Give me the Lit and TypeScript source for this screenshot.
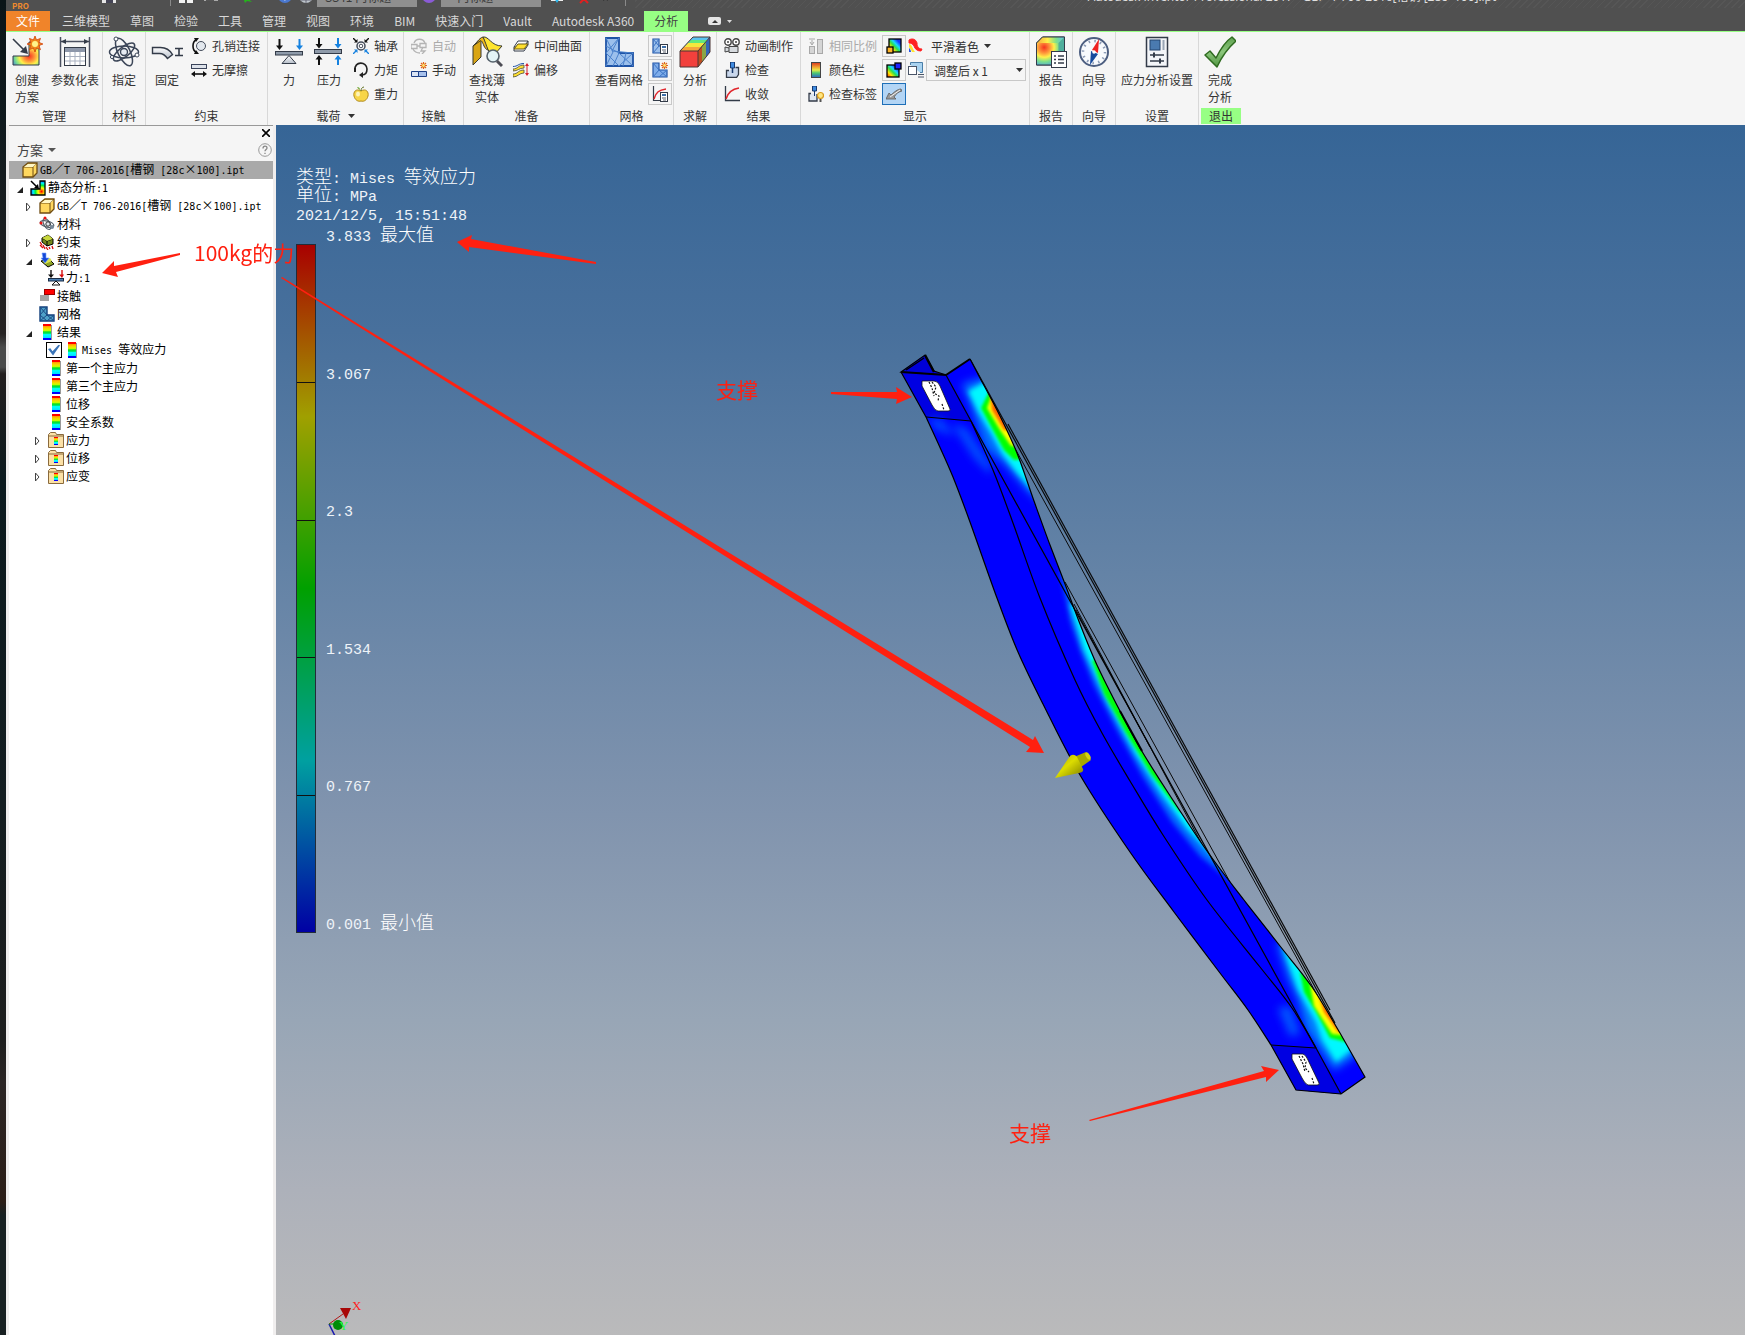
import { LitElement, html, svg, css, nothing, TemplateResult, SVGTemplateResult } from "lit";
import { customElement, state } from "lit/decorators.js";
import { classMap } from "lit/directives/class-map.js";

type Art = SVGTemplateResult;

/* ---------- 32px command icons ---------- */
const big: Record<string, Art> = {
  study: svg`<path d="M2 20h16V6h10v23H2z" fill="url(#g-heat)" stroke="#333b48"/><path d="M2 3l12 12" stroke="#333b48" stroke-width="1.600"/><path d="M17 18l-8-2 6-6z" fill="#333b48"/><path d="M24 0l1.500 4 4-1.600-1.600 4 4 1.600-4 1.600 1.600 4-4-1.600L24 16l-1.600-4-4 1.600 1.600-4-4-1.600 4-1.600-1.600-4 4 1.600z" fill="#f08a1c" stroke="#d2400a" stroke-width=".8"/><circle cx="24" cy="8" r="3" fill="#fff48a"/>`,
  table: svg`<path d="M1.500 1v30M30.500 1v30M2 5.500h28" stroke="#4a5060" stroke-width="1.500"/><path d="M2 5.500l5-2.500v5zM30 5.500l-5-2.500v5z" fill="#333b48"/><rect x="5.500" y="11.500" width="21" height="18" fill="#fff" stroke="#333b48"/><path d="M6 12h20v4H6z" fill="#8d97aa"/><path d="M6 20.500h20M6 25h20M11 16v13M16 16v13M21 16v13" stroke="#a9b1c0"/>`,
  atom: svg`<g fill="none" stroke="#3c4658" stroke-width="1.500"><ellipse cx="16" cy="16" rx="14.500" ry="6"/><ellipse cx="16" cy="16" rx="15" ry="6" transform="rotate(64 16 16)"/><ellipse cx="16" cy="16" rx="13" ry="5" transform="rotate(142 16 16)"/></g><circle cx="16" cy="16" r="3.500" fill="#e6ebf2" stroke="#3c4658" stroke-width="1.400"/><circle cx="8" cy="3" r="2" fill="#fff" stroke="#3c4658"/><circle cx="29" cy="19" r="2" fill="#fff" stroke="#3c4658"/><circle cx="4" cy="21" r="1.600" fill="#fff" stroke="#3c4658"/>`,
  fixed: svg`<path d="M1.500 11.500h8c5 0 9 2 12 7l-5 4c-2-3-4-5-8-5h-7z" fill="url(#g-steel)" stroke="#333b48" stroke-width="1.400"/><path d="M24 12.500h8M24 19.500h8M28 12.500v7" stroke="#333b48" stroke-width="1.600"/>`,
  force: svg`<path d="M6.500 3v8" stroke="#111" stroke-width="2"/><path d="M3 9.500h7L6.500 14z" fill="#111"/><path d="M26.500 3v8" stroke="#1682e0" stroke-width="2"/><path d="M23 9.500h7L26.500 14z" fill="#1682e0"/><rect x="2.500" y="15.500" width="27" height="3.500" fill="#8f9baa" stroke="#333b48"/><path d="M16 19.500l7 8H9z" fill="url(#g-steel)" stroke="#333b48"/>`,
  pressure: svg`<g stroke-width="2"><path d="M6 2v7M6 29v-7" stroke="#111"/><path d="M25 2v7M25 29v-7" stroke="#1682e0"/></g><path d="M2.500 8h7L6 12.500zM2.500 23.500h7L6 19z" fill="#111"/><path d="M21.500 8h7L25 12.500zM21.500 23.500h7L25 19z" fill="#1682e0"/><rect x="1.500" y="13.500" width="27" height="4" fill="#8f9baa" stroke="#333b48"/>`,
  thin: svg`<path d="M2 10v19l8-8V2z" fill="#d9a514" stroke="#3a3a30"/><path d="M2 10C5 8 8 2 12 1l8 12c-3 2-5 1-7-3-2-5-3-6-4-5z" fill="#f0b91a" stroke="#3a3a30"/><path d="M12 1c6-1 8 9 19 9l-8 9c-6 0-7-10-11-18z" fill="#ffe52e" stroke="#3a3a30"/><circle cx="22" cy="20" r="6" fill="#e4f4f6" stroke="#56626c" stroke-width="1.600"/><path d="M26 25l5 5" stroke="#4d4d55" stroke-width="3"/>`,
  mesh: svg`<path d="M3 2h13v15h14v13H3z" fill="#9cc0ec" stroke="#1e53a6" stroke-width="1.800"/><path d="M3 2l7 14L3 30M16 2L3 17l13 13M16 2L9 15l21 2M16 17L3 10M30 17L16 30M16 17l14 13M16 17l-6 13M23 17l-3 13" fill="none" stroke="#4b82cc"/>`,
  solve: svg`<path d="M1 15L14 1h17L19 15z" fill="#5ac4f0"/><path d="M1 15l4-4h17l-3 4z" fill="#f7a53a"/><path d="M5 11l4-4h17l-4 4z" fill="#f5e83c"/><path d="M9 7l3-3h17l-3 3z" fill="#62e87c"/><path d="M19 15l4-5v16l-4 5z" fill="#bf4e22"/><path d="M23 10l4-4v15l-4 5z" fill="#8aa646"/><path d="M27 6l4-5v15l-4 5z" fill="#3366b8"/><rect x="1" y="15" width="18" height="16" fill="#f2403c"/><path d="M1 15L14 1h17v15L19 31H1zM1 15h18v16M19 15L31 1" fill="none" stroke="#4a3434"/>`,
  report: svg`<path d="M1.500 7l6-6h22v21l-6 7h-22z" fill="#8fdc6a" stroke="#333b48"/><path d="M1.500 7l6-6h22l-6 6z" fill="url(#g-top)"/><path d="M1.500 7h22v22h-22z" fill="url(#g-front)"/><path d="M23.500 7l6-6v21l-6 7z" fill="#4fae9c"/><path d="M1.500 7l6-6h22v21l-6 7h-22z" fill="none" stroke="#333b48"/><rect x="16.500" y="15.500" width="15" height="16" fill="#fff" stroke="#333b48"/><path d="M19 20h2M19 23.500h2M19 27h2M23 20h6M23 23.500h6M23 27h6" stroke="#333b48" stroke-width="1.600"/>`,
  compass: svg`<circle cx="16" cy="16" r="14" fill="#f7f9fc" stroke="#4c5e80" stroke-width="2"/><circle cx="16" cy="16" r="11" fill="none" stroke="#8c9bb5" stroke-width="2.500" stroke-dasharray="1.500 4.260"/><path d="M21 3l-1 14-6-3z" fill="#ee2222"/><path d="M12 29l1-14 7 3z" fill="#174a9c"/><circle cx="16" cy="16" r="1.800" fill="#fff"/>`,
  settings: svg`<rect x="5.500" y="1.500" width="21" height="29" fill="#f3f5f8" stroke="#333b48" stroke-width="1.500"/><rect x="9" y="4" width="10" height="10" fill="#4a7ab0" stroke="#24456e"/><path d="M22.500 4v10" stroke="#99a5b5" stroke-width="2"/><path d="M9 19h14M9 25h14" stroke="#333b48" stroke-width="1.400"/><path d="M13 16.500v5M19 22.500v5" stroke="#333b48" stroke-width="2"/>`,
  check: svg`<path d="M1 19l5-4 6 7C17 12 22 5 28 1l4 4C25 11 18 20 13 31z" fill="url(#g-green)" stroke="#2f6b20" stroke-width="1.500" stroke-linejoin="round"/>`,
};

/* ---------- 16px command icons ---------- */
const small: Record<string, Art> = {
  pin: svg`<path d="M5 2C1 4 1 12 5 14" fill="none" stroke="#111" stroke-width="1.600"/><path d="M3 0h5L5 4zM3 16h5l-3-4z" fill="#111"/><circle cx="10" cy="8" r="4.500" fill="#e3e8ee" stroke="#444c5a"/>`,
  slide: svg`<rect x=".5" y="2.500" width="15" height="4" fill="#dde2ea" stroke="#39435a"/><path d="M2 12h12" stroke="#111" stroke-width="1.600"/><path d="M0 12l4-3v6zM16 12l-4-3v6z" fill="#111"/>`,
  bearing: svg`<circle cx="8" cy="8" r="4" fill="#fff" stroke="#444c5a" stroke-width="1.500"/><circle cx="8" cy="8" r="1.800" fill="none" stroke="#444c5a"/><path d="M0 0l3 3M16 0l-3 3" stroke="#111" stroke-width="1.400"/><path d="M0 16l3-3M16 16l-3-3" stroke="#1682e0" stroke-width="1.400"/><path d="M4.500 1v3.500H1zM11.500 1v3.500H15z" fill="#111"/><path d="M4.500 15v-3.500H1zM11.500 15v-3.500H15z" fill="#1682e0"/>`,
  moment: svg`<path d="M2 8C1 -1 14 -1 14 7c0 4-2 6-5 6" fill="none" stroke="#222" stroke-width="1.600"/><path d="M10 10v6l-4-3z" fill="#222"/><path d="M2 6v4" stroke="#222" stroke-width="2"/>`,
  gravity: svg`<path d="M8 5C3 2 0 6 1 10c1 4 4 6 7 5 3 1 6-1 7-5 1-4-2-8-7-5z" fill="#f7d548" stroke="#b08a1c"/><path d="M8 5c0-2 1-4 3-4" stroke="#5c6e20" fill="none"/><path d="M7 4C5 3 4 1 4 1c2 0 3 1 3 3z" fill="#6ba52e"/><ellipse cx="5" cy="8" rx="2" ry="2.500" fill="#fdf3b8"/>`,
  auto: svg`<g fill="none" stroke="#b4b4b4" stroke-width="1.300"><path d="M3 5c2-5 9-5 11 0M2 11c2 4 5 4 7 4"/><path d="M0 6.500h6v4H0zM9 5.500h6v4H9zM6 8h3"/><path d="M12 9l-2 4h4l-3 3"/></g>`,
  manual: svg`<path d="M.5 9.500h7v5h-7z" fill="#dce5f4" stroke="#1c3f86"/><path d="M7.500 9.500h8v5h-8z" fill="#a7c1ec" stroke="#1c3f86"/><path d="M12.500 0v7M9 3.500h7M10 1l5 5M15 1l-5 5" stroke="#e0661a" stroke-width="1.200"/><circle cx="12.500" cy="3.500" r="1.400" fill="#ffe36b"/>`,
  midsurf: svg`<path d="M1 9l4-6h10l-4 6zM1 9v4h10l4-6V3" fill="#fff" stroke="#333b48"/><path d="M1 11l4-5h10l-4 5z" fill="#ffe02e" stroke="#6a5a14"/>`,
  offset: svg`<path d="M0 7c5 0 5-4 11-4v3C6 6 5 9 0 9zM0 12c5 0 5-4 11-4v3c-5 0-6 4-11 4z" fill="#ffe02e" stroke="#4a4a40" stroke-width=".8"/><path d="M0 4.500c5 0 5-3 11-3" stroke="#1e53a6" fill="none"/><path d="M14 3v9" stroke="#d8202c"/><path d="M12 4l2-3 2 3zM12 11l2 3 2-3z" fill="#d8202c"/>`,
  meshset: svg`<path d="M1 1h6v7h8v7H1z" fill="#9cc0ec" stroke="#1e53a6" stroke-width="1.200"/><path d="M1 1l6 7-6 7M7 1L1 9" fill="none" stroke="#3c74c4"/><rect x="8.500" y="6.500" width="7" height="9" fill="#fff" stroke="#333b48"/><rect x="10" y="8" width="4" height="2" fill="#3b6ea8"/><path d="M10 12h4M11 14h3" stroke="#333b48" stroke-width=".8"/>`,
  meshnew: svg`<path d="M1 1h6v7h8v7H1z" fill="#7fadea" stroke="#1e53a6" stroke-width="1.200"/><path d="M1 1l6 7-6 7M7 8l8 7M15 8l-8 7" fill="none" stroke="#3c74c4"/><path d="M12.500 0v7M9 3.500h7M10 1l5 5M15 1l-5 5" stroke="#e0661a" stroke-width="1.200"/><circle cx="12.500" cy="3.500" r="1.400" fill="#ffe36b"/>`,
  convset: svg`<path d="M1.500 0v14.500H8" fill="none" stroke="#333b48" stroke-width="1.200"/><path d="M2 13C4 6 7 4 14 3" fill="none" stroke="#e0262c" stroke-width="1.500"/><rect x="8.500" y="6.500" width="7" height="9" fill="#fff" stroke="#333b48"/><rect x="10" y="8" width="4" height="2" fill="#3b6ea8"/><path d="M10 12h4M11 14h3" stroke="#333b48" stroke-width=".8"/>`,
  animate: svg`<circle cx="4" cy="4" r="3.200" fill="#fff" stroke="#444" stroke-width="1.400"/><circle cx="12" cy="4" r="3.200" fill="#fff" stroke="#444" stroke-width="1.400"/><circle cx="4" cy="4" r="1" fill="#444"/><circle cx="12" cy="4" r="1" fill="#444"/><path d="M5 8.500h9v6H5zM5 10l-4-1v5l4-1" fill="#d6dade" stroke="#444"/>`,
  probe: svg`<path d="M5 8.500H2.500v7h10l2-3v-7h-3" fill="#c9d7ec" stroke="#333b48" stroke-width="1.300"/><path d="M6.500 0h4v6h-4z" fill="#3f8be0" stroke="#17386e"/><path d="M8.500 6v5" stroke="#17386e" stroke-width="1.500"/>`,
  converge: svg`<path d="M1.500 0v14.500H16" fill="none" stroke="#333b48" stroke-width="1.300"/><path d="M2 13C4 6 8 3 15 2" fill="none" stroke="#e0262c" stroke-width="1.600"/>`,
  same: svg`<g fill="#d5d5d5" stroke="#a8a8a8"><rect x="1.500" y="8.500" width="5" height="7"/><rect x="9.500" y="1.500" width="5" height="14"/></g><path d="M1 1h6M4 2v4M2 4l2 3 2-3" fill="none" stroke="#a8a8a8"/>`,
  colorbar: svg`<rect x="3.500" y=".5" width="9" height="15" fill="url(#g-rain)" stroke="#444"/>`,
  probelabel: svg`<path d="M3 7.500H1v7.500h8V8" fill="#dfe7f2" stroke="#333b48" stroke-width="1.300"/><path d="M4.500 0h4v5h-4zM6.500 5v5" fill="#3f8be0" stroke="#17386e"/><circle cx="12.500" cy="9.500" r="3" fill="#ffe680" stroke="#d99a1a" stroke-width="1.200"/><path d="M12.500 13v3" stroke="#555" stroke-width="2"/>`,
  maxval: svg`<rect x="3" y="1" width="12" height="13" fill="url(#g-heat2)" stroke="#000" stroke-width="1.300"/><rect x="1" y="9" width="6" height="6" fill="#ffb428" stroke="#000" stroke-width="1.300"/>`,
  minval: svg`<rect x="1" y="3" width="12" height="12" fill="url(#g-heat2)" stroke="#000" stroke-width="1.300"/><rect x="9" y="1" width="6" height="6" fill="#1c22ff" stroke="#000" stroke-width="1.300"/>`,
  boundary: svg`<path d="M0 13l3-6 2 2c3-3 7-6 10-6l1 2c-4 1-6 3-8 6l2 2z" fill="#9a9a9a" stroke="#5c5c5c" stroke-width=".8"/><path d="M4 11l10-7" stroke="#f3f3f3"/>`,
  smooth: svg`<path d="M1 2c3-2 7-1 8 3 0 4 2 6 5 6l-1 2c-4 0-6-2-7-5-1-2-3-3-5-3z" fill="#f22" stroke="#f22"/><path d="M1 6c3 0 3 4 6 8H4C3 11 1 10 1 9z" fill="#ffe52e"/><path d="M1 10c1 1 2 2 2 4H1z" fill="#2453e8"/>`,
  adjust: svg`<path d="M2.500 3V.5h12v10H12" fill="#a9d3f0" stroke="#4a7ea8"/><rect x=".5" y="4.500" width="8" height="8" fill="#fff" stroke="#4a5568"/><path d="M10 12.500h6M10 15h6" stroke="#4a5568"/>`,
};

/* ---------- 16px browser-tree icons ---------- */
const node: Record<string, Art> = {
  part: svg`<path d="M1 5l5-4h9v10l-4 4H1z" fill="#ffd75e" stroke="#6f4c12" stroke-width="1.300"/><path d="M1 5h10l4-4M11 5v10" fill="none" stroke="#6f4c12"/><path d="M2 5l4-3h8l-3 3z" fill="#fff6c4"/>`,
  study: svg`<path d="M1 9h9V1h5v14H1z" fill="url(#g-heat3)" stroke="#000" stroke-width="1.300"/><path d="M1 1l6 6" stroke="#000" stroke-width="1.500"/><path d="M9 9L4 8l4-4z" fill="#000"/>`,
  material: svg`<g fill="none" stroke="#56626c" stroke-width="1.300"><ellipse cx="8" cy="8" rx="7" ry="3" transform="rotate(15 8 8)"/><ellipse cx="8" cy="8" rx="6" ry="3" transform="rotate(60 8 8)"/></g><circle cx="9" cy="8" r="2.200" fill="#dfe6ee" stroke="#333"/><circle cx="2" cy="7" r="1.500" fill="#e11"/><circle cx="6" cy="2" r="1.500" fill="#e11"/><circle cx="13" cy="11" r="2" fill="#789"/>`,
  constraint: svg`<path d="M3 4l6-3 5 4v5l-6 2-5-4z" fill="#76891c" stroke="#000"/><path d="M3 4l5 3 6-2M8 7v5" stroke="#000" fill="none"/><path d="M3 4l6-3 5 4-6 2z" fill="#c8d83e"/><path d="M1 8l2 3M1 11l3 3M4 11l2 4M7 13l2 3M10 13l1 2M13 12l1 3" stroke="#d80c0c" stroke-width="1.300"/>`,
  load: svg`<path d="M2 9l8-2 5 5-6 3z" fill="#8fa426" stroke="#000"/><path d="M4 8l7-2 2 3-7 3z" fill="#d7e24e"/><path d="M3 1h4v5h3l-4 5-4-5h2z" fill="#1448d8" stroke="#6fa2ff" stroke-width=".6"/>`,
  force: svg`<path d="M3 0v6" stroke="#111" stroke-width="1.400"/><path d="M14 0v6" stroke="#d80c0c" stroke-width="1.400"/><path d="M0 4.500h6L3 8z" fill="#111"/><path d="M11 4.500h5L14 8z" fill="#d80c0c"/><rect x=".5" y="8.500" width="15" height="2.500" fill="#4a7fb4" stroke="#1a2c44"/><path d="M8 11l4 4H4z" fill="#fff" stroke="#111"/>`,
  contact: svg`<rect x="5.500" y="1.500" width="10" height="5" fill="#f00" stroke="#900"/><rect x="1" y="7" width="9" height="6" fill="#a5a5a5"/>`,
  mesh: svg`<path d="M1 1h7v8h7v6H1z" fill="#4fa0c8" stroke="#123f7c" stroke-width="1.400"/><path d="M1 1l7 8-7 6M8 1L1 9l7 6M15 9l-7 6M8 9l7 6" fill="none" stroke="#1c4a84"/>`,
  band: svg`<rect x="4" width="8" height="16" fill="url(#g-band)"/><path d="M12.500 1v15" stroke="#999"/>`,
  folder: svg`<path d="M.5 2.500l2-2h5l1 2h7v13H.5z" fill="#fbe0a6" stroke="#8a6a3c"/><path d="M1 4h14" stroke="#8a6a3c"/><rect x="6" y="5" width="4" height="8" fill="url(#g-band)"/>`,
};

/* ---------- quick access icons ---------- */
const quick: Record<string, Art> = {
  新建: svg`<path d="M1 1h14v11H1z" fill="#eee"/>`,
  打开: svg`<path d="M3 3h8v7H3z" fill="#777"/>`,
  保存: svg`<path d="M1 1h14v14H1z" fill="#e6e6e6"/><path d="M5 9h7v6H5z" fill="#445"/>`,
  放弃: svg`<path d="M7 5l-3 4 4 2" fill="none" stroke="#ddd" stroke-width="2"/>`,
  重做: svg`<path d="M9 5l3 4-4 2" fill="none" stroke="#888" stroke-width="2"/>`,
  主页: svg`<path d="M1 3h14v12H9v-5H7v5H1z" fill="#f2f2f2"/>`,
  窗口: svg`<path d="M1 5h14v8H1z" fill="#aaa"/><path d="M3 8h8v5H3z" fill="#555"/>`,
  选择: svg`<path d="M3 4l11 10-5-1-2 2z" fill="#25b21c"/>`,
  材料浏览器: svg`<circle cx="8" cy="8" r="7" fill="#4a78d0"/><path d="M3 7h8l-3 6z" fill="#e6eefc"/>`,
  外观浏览器: svg`<circle cx="8" cy="8" r="7" fill="#bfc6cc"/><path d="M2 8h12M8 1v14M3 12h10" stroke="#667"/>`,
  颜色: svg`<circle cx="8" cy="8" r="7" fill="#8a5bd6"/><circle cx="7" cy="8" r="4" fill="#e87ac0"/>`,
  调整: svg`<path d="M8 4v9M2 12h12" stroke="#eee" stroke-width="2"/><path d="M5 10h6l-3 5z" fill="#28b8f0"/>`,
  清除: svg`<path d="M1 9h8" stroke="#eee" stroke-width="2"/><path d="M7 7l8 8M15 7l-8 8" stroke="#e02020" stroke-width="2"/>`,
  参数: svg`<path d="M4 3v9M9 7l5 5M14 7l-5 5" stroke="#222" stroke-width="2"/>`,
};

const ico = (art: Art, size = 16) =>
  html`<svg class="ico" width=${size} height=${size} viewBox="0 0 ${size} ${size}" aria-hidden="true">${art}</svg>`;

const caret = html`<svg class="caret" width="7" height="4" viewBox="0 0 7 4" aria-hidden="true"><path d="M0 0h7L3.500 4z" fill="currentColor"/></svg>`;

/* Latin runs sit on a half-em grid next to full-em Chinese glyphs. */
const grid = (text: string): TemplateResult[] =>
  (text.match(/[／×]|[ -~]+|[^ -~／×]+/g) ?? []).map((run) =>
    /[／×]/.test(run) ? html`<span class="wide">${run}</span>` : /^[ -~]/.test(run) ? html`<span class="half">${run}</span>` : html`<span>${run}</span>`,
  );

interface TreeRow {
  icon: string;
  text: string;
  level: number;
  open?: boolean;
  selected?: boolean;
  check?: boolean;
}

const rows: TreeRow[] = [
  { icon: "part", text: "GB／T 706-2016[槽钢 [28c×100].ipt", level: 0, selected: true },
  { icon: "study", text: "静态分析:1", level: 1, open: true },
  { icon: "part", text: "GB／T 706-2016[槽钢 [28c×100].ipt", level: 2, open: false },
  { icon: "material", text: "材料", level: 2 },
  { icon: "constraint", text: "约束", level: 2, open: false },
  { icon: "load", text: "载荷", level: 2, open: true },
  { icon: "force", text: "力:1", level: 3 },
  { icon: "contact", text: "接触", level: 2 },
  { icon: "mesh", text: "网格", level: 2 },
  { icon: "band", text: "结果", level: 2, open: true },
  { icon: "band", text: "Mises 等效应力", level: 3, check: true },
  { icon: "band", text: "第一个主应力", level: 3 },
  { icon: "band", text: "第三个主应力", level: 3 },
  { icon: "band", text: "位移", level: 3 },
  { icon: "band", text: "安全系数", level: 3 },
  { icon: "folder", text: "应力", level: 3, open: false },
  { icon: "folder", text: "位移", level: 3, open: false },
  { icon: "folder", text: "应变", level: 3, open: false },
];

const tabs = ["文件", "三维模型", "草图", "检验", "工具", "管理", "视图", "环境", "BIM", "快速入门", "Vault", "Autodesk A360", "分析"];

/* ---------- deformed beam geometry ---------- */
type Pt = [number, number];

/* Catmull-Rom curve through the points, as cubic segments that continue a path. */
const through = (p: Pt[]): string =>
  p
    .slice(1)
    .map((b, i) => {
      const a = p[i];
      const before = p[i - 1] ?? a;
      const after = p[i + 2] ?? b;
      const c1 = [a[0] + (b[0] - before[0]) / 6, a[1] + (b[1] - before[1]) / 6];
      const c2 = [b[0] - (after[0] - a[0]) / 6, b[1] - (after[1] - a[1]) / 6];
      return `C${[...c1, ...c2, ...b].map((n) => Math.round(n * 10) / 10).join(" ")}`;
    })
    .join("");

const leftPts: Pt[] = [[926, 417], [938, 443], [953, 477], [970, 522], [997, 598], [1018, 652], [1043, 704], [1080, 775], [1130, 852], [1174, 912], [1220, 973], [1248, 1010], [1271, 1045]];
const cornerPts: Pt[] = [[971, 421], [993, 470], [1013, 523], [1040, 598], [1075, 680], [1102, 733], [1130, 781], [1163, 835], [1207, 900], [1260, 967], [1292, 1008], [1316, 1048]];
const rightPts: Pt[] = [[1340, 1033], [1312, 987], [1280, 946], [1244, 900], [1207, 851], [1167, 791], [1140, 748], [1120, 711], [1097, 665], [1080, 624], [1065, 584], [1050, 545], [1034, 501], [1017, 453], [1000, 416], [980, 378]];

const LEFT = `M901 372L926 417${through(leftPts)}L1296 1090`;
const CORNER = `M946 375L971 421${through(cornerPts)}L1341 1094`;
const RIGHT = `L1365 1077L1340 1033${through(rightPts)}L970 359`;
const BODY = `${LEFT}L1341 1094${RIGHT}`;

@customElement("app-root")
export class AppRoot extends LitElement {
  @state() private activeTab = "分析";

  static styles = css`
    :host {
      display: block;
      font-family: "Noto Sans CJK SC", "Open Sans", sans-serif;
      font-size: 12px;
      color: #333;
    }
    * { box-sizing: border-box; }
    button, select, input { font: inherit; color: inherit; margin: 0; }
    button { border: 0; background: none; padding: 0; cursor: default; }
    svg { display: block; flex: none; }
    .defs { position: absolute; }
    .app {
      position: relative;
      display: flex;
      min-height: 100vh;
      overflow: hidden;
    }
    .desktop {
      flex: 0 0 6px;
      background: linear-gradient(#0b1518 0, #101a1e 9%, #262222 25%, #4a4a4a 26%, #4a4a4a 27.500%, #231f1f 28%, #0c1a1e 36%, #141d20 60%, #1e1e1e 78%, #2b2524 81%, #2c1e17 90%, #182022 91%, #182022 100%);
    }
    .window { flex: 1; min-width: 0; display: flex; flex-direction: column; }

    /* quick access bar, partly above the window's top edge */
    .quick {
      display: flex;
      height: 30px;
      margin-top: -19px;
      background: #505050;
      color: #e0e0e0;
    }
    .tools {
      display: grid;
      grid-template-columns: 33px 36px 26px 23px 23px 23px 8px 25px 35px 39px 21px 19px 104px 20px 108px 24px 21px 31px 10px;
      align-items: center;
      flex: none;
    }
    .logo { font-size: 8px; line-height: 10px; font-weight: 700; color: #ef8a2e; padding: 19px 0 0 6px; }
    .rule { width: 1px; height: 20px; background: #8a8a8a; }
    .field { width: 100px; height: 22px; border: 0; border-radius: 0; background: #8f8f8f; padding: 0 8px; color: #3a3a3a; appearance: none; }
    .caption {
      flex: 1;
      display: flex;
      align-items: center;
      justify-content: center;
      padding-left: 204px;
      font-family: "Open Sans", "Noto Sans CJK SC", sans-serif;
      white-space: nowrap;
      background: repeating-linear-gradient(135deg, #505050 0 4px, #565656 4px 5px) top / 100% 27px no-repeat;
    }

    .tabs { display: flex; height: 21px; background: #505050; border-bottom: 1px solid #97ff84; }
    .tab { padding: 0 10px; color: #d8d8d8; line-height: 18px; white-space: nowrap; }
    .tab.file { background: #f0842a; color: #fff; margin-right: 2px; }
    .tab.on { background: #97ff84; color: #444; }
    .collapse { display: flex; align-items: center; gap: 6px; padding-left: 20px; color: #ddd; }
    .pill { width: 13px; height: 8px; border-radius: 2px; background: #e4e4e4; display: grid; place-items: center; }

    .ribbon {
      display: grid;
      grid-template-columns: 97px 43px 122px 136px 60px 126px 84px 43px 84px 229px 43px 43px 83px 44px;
      grid-auto-rows: 93px;
      background: #f5f5f5;
    }
    .panel { border-right: 1px solid #d8d8d8; display: flex; flex-direction: column; padding-top: 2px; }
    .panel:last-child { border-right: 0; }
    .body { display: flex; gap: 2px; padding-left: 2px; height: 74px; }
    .body.inset { padding-left: 4px; }
    .label { display: flex; align-items: center; justify-content: center; gap: 7px; height: 16px; line-height: 16px; margin: 0 2px; }
    .label.exit { background: #97ff84; }
    .large {
      display: flex;
      flex-direction: column;
      align-items: center;
      min-width: 38px;
      padding: 2px 3px 0;
      line-height: 17px;
      white-space: nowrap;
    }
    .large .ico { margin-bottom: 3px; }
    .stack { display: flex; flex-direction: column; }
    .small { display: flex; align-items: center; gap: 5px; height: 24px; padding: 0 3px; line-height: 16px; white-space: nowrap; }
    .small:disabled { color: #aaa; }
    .tool { width: 24px; height: 22px; margin: 1px 0; border: 1px solid #c8c8c8; display: grid; place-items: center; }
    .tool.on { border-color: #1e6fb8; background: #b3d5f5; }
    .line { display: flex; align-items: center; gap: 2px; height: 24px; }
    .shade { display: flex; align-items: center; gap: 5px; padding-left: 5px; }
    .pick { position: relative; display: flex; align-items: center; }
    .pick select {
      width: 100px;
      height: 22px;
      appearance: none;
      border: 1px solid #c8c8c8;
      border-radius: 0;
      background: #f5f5f5;
      padding: 0 7px;
    }
    .pick .caret { position: absolute; right: 3px; pointer-events: none; }

    .work { flex: 1; display: flex; min-height: 0; }
    .browser {
      flex: 0 0 270px;
      background: #fff;
      border: solid #f0eeee;
      border-width: 0 3px;
    }
    .head {
      display: grid;
      grid-template-columns: 1fr auto;
      align-items: center;
      height: 36px;
      padding: 0 1px 2px 8px;
      background: #f5f5f5;
      border-top: 1px solid #999;
      font-size: 13px;
      color: #444;
    }
    .head .menu { grid-row: 2; display: flex; align-items: center; gap: 5px; line-height: 16px; }
    .head .close { grid-column: 2; justify-self: end; padding: 2px; }
    .head .help { grid-column: 2; grid-row: 2; line-height: 16px; }
    .tree { list-style: none; margin: 0; padding: 0; color: #000; line-height: 18px; }
    .row { display: flex; align-items: center; gap: 2px; height: 18px; white-space: nowrap; }
    .row.selected { background: #a9a9a9; }
    .row.l1 { padding-left: 8px; }
    .row.l2 { padding-left: 17px; }
    .row.l3 { padding-left: 26px; }
    .twisty { width: 11px; height: 16px; display: flex; align-items: center; }
    .row input {
      appearance: none;
      width: 16px;
      height: 16px;
      border: 1px solid #000;
      display: grid;
      place-items: center;
      background: #fff;
    }
    .row input:checked::before {
      content: "";
      width: 12px;
      height: 11px;
      background: #3a74b8;
      clip-path: polygon(0 40%, 20% 34%, 38% 62%, 90% 0, 100% 8%, 42% 100%);
    }
    .row .checked { display: flex; align-items: center; gap: 2px; margin-left: -2px; }
    .half { font-family: "DejaVu Sans Mono", monospace; font-size: 10px; white-space: pre; }
    .wide { display: inline-block; width: 12px; text-align: center; }

    .view {
      position: relative;
      flex: 1;
      min-width: 0;
      padding: 41px 20px 0;
      background: linear-gradient(#366596 0, #48709c 17%, #6483a6 37%, #8194ae 57%, #98a6b6 74%, #adb1ba 88%, #bababb 100%);
      color: #fff;
      font-size: 18px;
      font-weight: 300;
      line-height: 18px;
    }
    .view .half { font-family: "Liberation Mono", monospace; font-size: 15px; color: #eef3f8; }
    .info { height: 18px; margin: 0; }
    .stamp { height: 20px; margin: 1px 0 0; line-height: 18px; }
    .legend { display: flex; align-items: flex-end; gap: 10px; }
    .scale {
      display: grid;
      grid-template-rows: repeat(5, 1fr);
      width: 20px;
      height: 689px;
      border: 1px solid #222c38;
      background: linear-gradient(#a80000, #a0a000 25%, #00a000 50%, #00a0a0 75%, #0000a4);
    }
    .scale i + i { border-top: 1px solid #111; }
    .marks { display: flex; flex-direction: column; justify-content: space-between; height: 708px; margin: 0 0 2px; padding: 0; list-style: none; line-height: 20px; }
    .marks li { height: 20px; }
    .model { position: absolute; left: 0; top: 0; pointer-events: none; }
    .triad { position: absolute; left: 40px; bottom: 0; }
    .notes {
      position: absolute;
      left: 0;
      top: 0;
      pointer-events: none;
      fill: #ff2010;
      font-size: 21px;
    }
    .axis { font-family: "Liberation Serif", serif; font-size: 13px; }
  `;

  private large(icon: string, ...lines: string[]) {
    return html`<button class="large">${ico(big[icon], 32)}${lines.map((l) => html`<span>${l}</span>`)}</button>`;
  }

  private small(icon: string, text: string, disabled = false) {
    return html`<button class="small" ?disabled=${disabled}>${ico(small[icon])}<span>${text}</span></button>`;
  }

  private tool(icon: string, name: string, on = false) {
    return html`<button class=${classMap({ tool: true, on })} aria-label=${name}>${ico(small[icon])}</button>`;
  }

  private panel(label: string, body: unknown, opts: { inset?: boolean; menu?: boolean; exit?: boolean } = {}) {
    return html`<section class="panel">
      <div class=${classMap({ body: true, inset: !!opts.inset })}>${body}</div>
      <div class=${classMap({ label: true, exit: !!opts.exit })}>${label}${opts.menu ? caret : nothing}</div>
    </section>`;
  }

  private defs() {
    return html`<svg class="defs" width="0" height="0" aria-hidden="true">
      <defs>
        <radialGradient id="g-heat" cx=".62" cy=".62" r=".75"><stop offset="0" stop-color="#f5331f"/><stop offset=".3" stop-color="#ff9a3c"/><stop offset=".5" stop-color="#fff04a"/><stop offset=".72" stop-color="#7ee08a"/><stop offset="1" stop-color="#3b78e0"/></radialGradient>
        <radialGradient id="g-front" cx=".35" cy=".2" r=".9"><stop offset="0" stop-color="#f5331f"/><stop offset=".3" stop-color="#ff9a3c"/><stop offset=".5" stop-color="#fff04a"/><stop offset=".72" stop-color="#7ee08a"/><stop offset="1" stop-color="#4aa0e8"/></radialGradient>
        <linearGradient id="g-top"><stop offset="0" stop-color="#f5a63a"/><stop offset=".4" stop-color="#fff04a"/><stop offset=".7" stop-color="#7ee08a"/><stop offset="1" stop-color="#5cc0f0"/></linearGradient>
        <linearGradient id="g-heat2" x1="0" y1="1" x2="1" y2="0"><stop offset="0" stop-color="#ff2a00"/><stop offset=".25" stop-color="#ffe600"/><stop offset=".45" stop-color="#2be04a"/><stop offset=".6" stop-color="#18d8ff"/><stop offset=".8" stop-color="#1436ff"/></linearGradient>
        <radialGradient id="g-heat3" cx=".75" cy=".75" r=".8"><stop offset="0" stop-color="#f00"/><stop offset=".3" stop-color="#ff0"/><stop offset=".55" stop-color="#0e4"/><stop offset=".75" stop-color="#0ef"/><stop offset="1" stop-color="#03f"/></radialGradient>
        <linearGradient id="g-rain" x2="0" y2="1"><stop offset="0" stop-color="#d8331c"/><stop offset=".3" stop-color="#f0a030"/><stop offset=".5" stop-color="#e8e848"/><stop offset=".7" stop-color="#4cc870"/><stop offset="1" stop-color="#2c62cc"/></linearGradient>
        <linearGradient id="g-band" x2="0" y2="1"><stop offset=".1" stop-color="#f00"/><stop offset=".1" stop-color="#f80"/><stop offset=".25" stop-color="#fc0"/><stop offset=".4" stop-color="#cf0"/><stop offset=".5" stop-color="#0d2"/><stop offset=".62" stop-color="#0e8"/><stop offset=".66" stop-color="#0ff"/><stop offset=".9" stop-color="#0df"/><stop offset=".9" stop-color="#00f"/></linearGradient>
        <linearGradient id="g-steel" x2="0" y2="1"><stop offset="0" stop-color="#fff"/><stop offset="1" stop-color="#b6bec9"/></linearGradient>
        <linearGradient id="g-green" x2="0" y2="1"><stop offset="0" stop-color="#5fa050"/><stop offset=".5" stop-color="#8cc77c"/><stop offset="1" stop-color="#4f9440"/></linearGradient>
      </defs>
    </svg>`;
  }

  private quickBar() {
    const b = (k: string) => html`<button aria-label=${k}>${ico(quick[k])}</button>`;
    return html`<header class="quick">
      <div class="tools">
        <span class="logo">PRO</span>
        ${["新建", "打开", "保存", "放弃", "重做"].map(b)}<span class="rule"></span>
        ${["主页", "窗口", "选择", "材料浏览器", "外观浏览器"].map(b)}
        <select class="field" aria-label="材料"><option>SS41 内标题</option></select>
        ${b("颜色")}
        <select class="field" aria-label="外观"><option>* 内标题</option></select>
        ${["调整", "清除", "参数"].map(b)}<span class="rule"></span>
      </div>
      <div class="caption">Autodesk Inventor Professional 2017 &nbsp; GB／T 706-2016[槽钢 [28c×100].ipt</div>
    </header>`;
  }

  private ribbon() {
    return html`<div class="ribbon">
      ${this.panel("管理", [this.large("study", "创建", "方案"), this.large("table", "参数化表")])}
      ${this.panel("材料", this.large("atom", "指定"))}
      ${this.panel("约束", html`${this.large("fixed", "固定")}<div class="stack">${this.small("pin", "孔销连接")}${this.small("slide", "无摩擦")}</div>`)}
      ${this.panel("载荷", html`${this.large("force", "力")}${this.large("pressure", "压力")}<div class="stack">${this.small("bearing", "轴承")}${this.small("moment", "力矩")}${this.small("gravity", "重力")}</div>`, { menu: true })}
      ${this.panel("接触", html`<div class="stack">${this.small("auto", "自动", true)}${this.small("manual", "手动")}</div>`, { inset: true })}
      ${this.panel("准备", html`${this.large("thin", "查找薄", "实体")}<div class="stack">${this.small("midsurf", "中间曲面")}${this.small("offset", "偏移")}</div>`)}
      ${this.panel("网格", html`${this.large("mesh", "查看网格")}<div class="stack">${this.tool("meshset", "网格设置")}${this.tool("meshnew", "局部网格控制")}${this.tool("convset", "收敛设置")}</div>`)}
      ${this.panel("求解", this.large("solve", "分析"))}
      ${this.panel("结果", html`<div class="stack">${this.small("animate", "动画制作")}${this.small("probe", "检查")}${this.small("converge", "收敛")}</div>`, { inset: true })}
      ${this.panel(
        "显示",
        html`<div class="stack">${this.small("same", "相同比例", true)}${this.small("colorbar", "颜色栏")}${this.small("probelabel", "检查标签")}</div>
          <div class="stack">${this.tool("maxval", "最大值")}${this.tool("minval", "最小值")}${this.tool("boundary", "边界条件", true)}</div>
          <div class="stack">
            <div class="line">${ico(small.smooth)}<button class="shade">平滑着色${caret}</button></div>
            <div class="line">${ico(small.adjust)}<label class="pick"><select aria-label="位移显示"><option>调整后 x 1</option></select>${caret}</label></div>
          </div>`,
        { inset: true },
      )}
      ${this.panel("报告", this.large("report", "报告"))}
      ${this.panel("向导", this.large("compass", "向导"))}
      ${this.panel("设置", this.large("settings", "应力分析设置"))}
      ${this.panel("退出", this.large("check", "完成", "分析"), { exit: true })}
    </div>`;
  }

  private treeRow(r: TreeRow) {
    const twisty =
      r.open === undefined
        ? nothing
        : r.open
          ? html`<svg width="6" height="12" viewBox="0 0 6 12"><path d="M6 5v6H0z" fill="#222"/></svg>`
          : html`<svg width="6" height="10" viewBox="0 0 6 10"><path d="M.5 2l3.500 4-3.500 4z" fill="#fff" stroke="#444"/></svg>`;
    return html`<li class=${classMap({ row: true, selected: !!r.selected, [`l${r.level}`]: true })}>
      <span class="twisty">${twisty}</span>
      ${r.check
        ? html`<label class="checked"><input type="checkbox" checked />${ico(node[r.icon])}<span>${grid(r.text)}</span></label>`
        : html`${ico(node[r.icon])}<span>${grid(r.text)}</span>`}
    </li>`;
  }

  private browser() {
    return html`<aside class="browser">
      <div class="head">
        <button class="close" aria-label="关闭"><svg width="8" height="8" viewBox="0 0 8 8"><path d="M0 0l8 8M8 0L0 8" stroke="#000" stroke-width="1.600"/></svg></button>
        <button class="menu">方案<svg width="8" height="4" viewBox="0 0 8 4"><path d="M0 0h8L4 4z" fill="#555"/></svg></button>
        <button class="help" aria-label="帮助"><svg width="14" height="14" viewBox="0 0 14 14"><circle cx="7" cy="7" r="6.300" fill="none" stroke="#999"/><path d="M5 5.500c0-3 4-3 4-.5 0 1.500-2 1.500-2 3.300M7 9.700v1.300" fill="none" stroke="#888" stroke-width="1.300"/></svg></button>
      </div>
      <ul class="tree">${rows.map((r) => this.treeRow(r))}</ul>
    </aside>`;
  }

  private model() {
    return html`<svg class="model" width="1469" height="1210" viewBox="276 125 1469 1210" aria-label="槽钢应力云图">
      <defs>
        <clipPath id="flange"><path d="${CORNER}${RIGHT}Z"/></clipPath>
        <clipPath id="body"><path d="${BODY}L946 375Z"/></clipPath>
        <filter id="b1" x="-50%" y="-50%" width="200%" height="200%"><feGaussianBlur stdDeviation="1.500"/></filter>
        <filter id="b3" x="-50%" y="-50%" width="200%" height="200%"><feGaussianBlur stdDeviation="2.500"/></filter>
        <filter id="b6" x="-50%" y="-50%" width="200%" height="200%"><feGaussianBlur stdDeviation="4"/></filter>
        <linearGradient id="g-cone" x2="1" y2="1"><stop offset="0" stop-color="#a8a800"/><stop offset=".45" stop-color="#dcdc00"/><stop offset="1" stop-color="#7c7c00"/></linearGradient>
      </defs>
      <g fill="none" stroke="#0a0a0a">
        <path d="M970 359L1335 1023" stroke-width="1.200"/>
        <path d="M1008 424L1330 1010" stroke-width="1.200"/>
        <path d="M1007 434L1320 1000"/>
        <path d="M1065 582L1230 882M1074 604L1205 850M1076 610L1150 747"/>
      </g>
      <path d="M901 372L925 355L934 371L946 375Z" fill="#0000d8" stroke="#000" stroke-width="1.200"/>
      <path d="M925 355L934 372" stroke="#000" stroke-width="2.500"/>
      <path d="M906 370L924 358" stroke="#000" stroke-width="1.500"/>
      <path d="${BODY}L946 375Z" fill="#0000ff"/>
      <path d="M901 372L946 375L971 421L926 417ZM1271 1045L1316 1048L1341 1094L1296 1090Z" fill="#0000e2"/>
      <g clip-path="url(#body)"><g filter="url(#b6)" fill="#0058ff">
        <path d="M927 419L942 419L955 436L936 430Z" opacity=".8"/>
        <path d="M952 424L966 428L992 466L990 474L974 458Z" opacity=".9"/>
        <path d="M1278 1008L1290 1006L1300 1034L1290 1036Z"/>
      </g></g>
      <g clip-path="url(#flange)">
        <path d="M962 384L994 374L1044 505L1028 492L1004 464L984 448L970 404Z" fill="#0070ff" filter="url(#b6)"/>
        <path d="M968 391L996 376L1044 500L1030 488L1016 472L1002 454L990 432L978 412Z" fill="#00f8ff" filter="url(#b3)"/>
        <path d="M994 382L1034 458L1014 460L1004 450L994 432L981 408Z" fill="#00ff00" filter="url(#b1)"/>
        <path d="M996 384L1026 446L1011 446L1000 430L987 408Z" fill="#ffff00" filter="url(#b1)"/>
        <path d="M990 390L1020 430L1004 430L992 410Z" fill="#ff6400" filter="url(#b1)"/>
        <path d="M1060 570L1070 620L1080 650L1094 685L1117 730L1143 777L1172 822L1200 856L1234 884L1250 870L1150 720L1090 580Z" fill="#0068ff" filter="url(#b3)"/>
        <path d="M1070 604L1084 650L1108 703L1135 753L1162 795L1187 829L1216 860L1230 850L1150 730L1090 600Z" fill="#00ffff" filter="url(#b3)"/>
        <path d="M1092 660L1104 694L1126 733L1151 774L1180 812L1194 806L1150 730L1110 660Z" fill="#00ff10" filter="url(#b1)"/>
        <path d="M1276 940L1288 978L1298 1000L1306 1030L1334 1070L1356 1056L1342 1010L1310 968Z" fill="#0080ff" filter="url(#b6)"/>
        <path d="M1280 940L1298 990L1316 1022L1322 1040L1336 1062L1354 1048L1348 1020L1316 970Z" fill="#00f8ff" filter="url(#b3)"/>
        <path d="M1300 972L1304 992L1316 1012L1330 1038L1346 1042L1356 1030L1326 976Z" fill="#00ff00" filter="url(#b1)"/>
        <path d="M1310 984L1314 1006L1332 1034L1350 1036L1350 1020L1324 984Z" fill="#ffff00" filter="url(#b1)"/>
        <path d="M1319 996L1324 1012L1338 1032L1350 1030L1330 996Z" fill="#ff6400" filter="url(#b1)"/>
      </g>
      <g fill="none" stroke="#000" stroke-width="1.200">
        <path d="${BODY}"/>
        <path d=${CORNER}/>
        <path d="M926 417L971 421M1271 1045L1316 1048M971 421L1316 1048"/>
        <path d="M901 372L946 375L970 359" stroke-width="2"/>
        <path d="M1120 711L1142 751" stroke-width="2"/>
      </g>
      <g fill="#fff" stroke="#111" stroke-width=".8">
        <path d="M922 381H934Q938 381 940 386L950 409Q951 411 948 411H938Q935 411 932 405L922 386Z"/>
        <path d="M1292 1054H1303Q1306 1055 1308 1060L1319 1083Q1320 1085 1317 1085H1308Q1305 1084 1302 1078L1292 1059Z"/>
      </g>
      <path d="M929 382l3 6 2 8M932 382l4 5-2 6 5 3-1 5M942 404l2 6M1299 1056l4 8 2 8M1302 1056l4 6-1 6 4 4M1312 1078l2 6" fill="none" stroke="#111" stroke-width="1.200" stroke-dasharray="2 1.500"/>
      <path d="M1074 757L1086 752L1091 760L1081 767Z" fill="#a8a800"/>
      <ellipse cx="1088" cy="756" rx="2" ry="4" transform="rotate(-30 1088 756)" fill="#d4d410"/>
      <path d="M1055 778L1070 756Q1074 753 1077 757L1083 769Q1084 772 1079 773Z" fill="url(#g-cone)"/>
    </svg>`;
  }

  private viewport() {
    return html`<main class="view">
      <p class="info">${grid("类型: Mises 等效应力")}</p>
      <p class="info">${grid("单位: MPa")}</p>
      <p class="stamp">${grid("2021/12/5, 15:51:48")}</p>
      <div class="legend">
        <div class="scale"><i></i><i></i><i></i><i></i><i></i></div>
        <ol class="marks">
          ${["3.833 最大值", "3.067", "2.3", "1.534", "0.767", "0.001 最小值"].map((m) => html`<li>${grid(m)}</li>`)}
        </ol>
      </div>
      ${this.model()}
      <svg class="triad" width="60" height="40" viewBox="316 1295 60 40" aria-hidden="true">
        <path d="M329 1324L343 1314" stroke="#b01818"/><path d="M329 1324L335 1336" stroke="#1818b0" stroke-width="1.500"/><path d="M329 1324h6" stroke="#00a000"/>
        <path d="M340 1308L351 1308L346 1319Z" fill="#a80808"/><circle cx="338" cy="1325" r="5" fill="#008c08"/>
        <text class="axis" x="352" y="1310" fill="#ff2020">X</text><text class="axis" x="339" y="1330" fill="#20ff40">Y</text>
      </svg>
    </main>`;
  }

  private notes() {
    return html`<svg class="notes" width="1745" height="1335" viewBox="0 0 1745 1335">
      <path d="M102 273L114 261L114 266L180 253L180 255L116 272L118 277Z"/>
      <path d="M457 242L472 235L471 239L596 262L596 264L469 247L469 252Z"/>
      <path d="M282 277L1033 740L1035 736L1044 753L1026 752L1030 747L281 278Z"/>
      <path d="M831 392L897 392L896 387L912 397L896 404L897 399L831 394Z"/>
      <path d="M1089 1120L1264 1071L1261 1066L1279 1070L1266 1082L1266 1077L1090 1121Z"/>
      <text x="194" y="261">100kg的力</text>
      <text x="716" y="398">支撑</text>
      <text x="1009" y="1141">支撑</text>
    </svg>`;
  }

  render() {
    return html`${this.defs()}
      <div class="app">
        <div class="desktop"></div>
        <div class="window">
          ${this.quickBar()}
          <nav class="tabs">
            ${tabs.map(
              (t, i) => html`<button class=${classMap({ tab: true, file: i === 0, on: t === this.activeTab })} @click=${() => (this.activeTab = t)}>${t}</button>`,
            )}
            <button class="collapse" aria-label="最小化功能区">
              <span class="pill"><svg width="6" height="3" viewBox="0 0 6 3"><path d="M0 3h6L3 0z" fill="#333"/></svg></span>
              <svg width="5" height="3" viewBox="0 0 5 3"><path d="M0 0h5L2.500 3z" fill="#ddd"/></svg>
            </button>
          </nav>
          ${this.ribbon()}
          <div class="work">${this.browser()}${this.viewport()}</div>
        </div>
        ${this.notes()}
      </div>`;
  }
}
